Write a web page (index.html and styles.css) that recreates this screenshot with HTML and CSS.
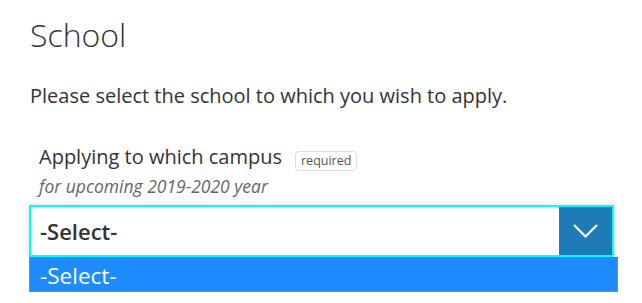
FILE: index.html
```html
<!DOCTYPE html>
<html>
<head>
<meta charset="utf-8">
<link rel="stylesheet" href="styles.css">
</head>
<body>
<div class="page">
  <h1 class="title">School</h1>
  <p class="intro">Please select the school to which you wish to apply.</p>
  <div class="field">
    <div class="label-row">
      <span class="label">Applying to which campus</span>
      <span class="badge">required</span>
    </div>
    <div class="hint">for upcoming 2019-2020 year</div>
  </div>
  <div class="select">
    <div class="select-value">-Select-</div>
    <div class="select-arrow">
      <svg width="25" height="14" viewBox="0 0 25 14"><path d="M1 1 L12.5 12.5 L24 1" fill="none" stroke="#fff" stroke-width="2.2"/></svg>
    </div>
  </div>
  <div class="options">
    <div class="option">-Select-</div>
  </div>
</div>
</body>
</html>
```
FILE: styles.css
```css
html, body {
  margin: 0;
  padding: 0;
  background: #fff;
}
body {
  font-family: "Open Sans", "Noto Sans", sans-serif;
  color: #333;
}
.page {
  padding: 13px 0 0 29px;
  width: 588px;
}
.title {
  margin: 0 0 26px 1px;
  font-size: 32px;
  font-weight: 300;
  line-height: 44px;
  color: #333;
}
.intro {
  margin: 0 0 36px 1px;
  font-size: 20px;
  line-height: 26px;
}
.field {
  padding-left: 10px;
  margin-bottom: 8px;
}
.label-row {
  display: flex;
  align-items: center;
  height: 24px;
}
.label {
  font-size: 20px;
  line-height: 24px;
}
.badge {
  margin-left: 13px;
  margin-top: 7px;
  font-size: 12.5px;
  line-height: 18px;
  padding: 0 5px;
  border: 1px solid #ddd;
  border-radius: 4px;
  color: #555;
}
.hint {
  margin-top: 6px;
  font-size: 17.5px;
  line-height: 22px;
  font-style: italic;
  color: #666;
}
.select {
  display: flex;
  height: 48px;
  width: 581px;
  border: 2px solid #0ff;
  box-shadow: 0 0 4px rgba(0,0,0,0.18);
}
.select-value {
  flex: 1;
  padding-left: 9px;
  font-size: 22px;
  font-weight: 600;
  line-height: 48px;
  color: #333;
}
.select-arrow {
  width: 53px;
  background: #1f7ab8;
  display: flex;
  align-items: center;
  justify-content: center;
}
.options {
  width: 587px;
  border: 1px solid #5b8ad0;
  border-top: none;
  background: #1e8cfe;
}
.option {
  height: 32px;
  padding: 2px 0 0 10px;
  font-size: 22.5px;
  line-height: 34px;
  color: #fff;
}
```
